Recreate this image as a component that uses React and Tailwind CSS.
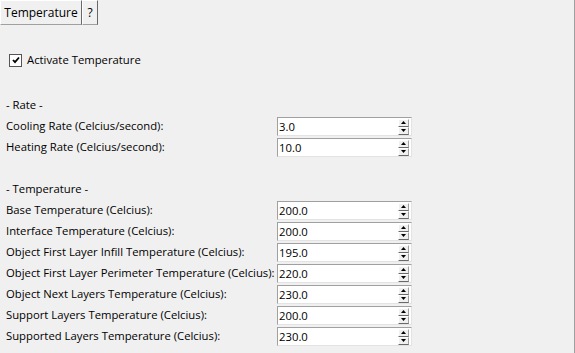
import React from "react";

const rateRows = [
  ["Cooling Rate (Celcius/second):", "3.0"],
  ["Heating Rate (Celcius/second):", "10.0"],
];

const tempRows = [
  ["Base Temperature (Celcius):", "200.0"],
  ["Interface Temperature (Celcius):", "200.0"],
  ["Object First Layer Infill Temperature (Celcius):", "195.0"],
  ["Object First Layer Perimeter Temperature (Celcius):", "220.0"],
  ["Object Next Layers Temperature (Celcius):", "230.0"],
  ["Support Layers Temperature (Celcius):", "200.0"],
  ["Supported Layers Temperature (Celcius):", "230.0"],
];

const SpinBox = ({ value }) => {
  return (
    <div className="w-[135px] h-[19px] flex items-center bg-white border border-t-[#a0a0a0] border-l-[#a0a0a0] border-r-[#e3e3e3] border-b-[#e3e3e3]">
      <div className="flex-1 pl-[1px] leading-none text-black">{value}</div>
      <div className="flex flex-col mr-[2px]">
        <div className="w-[11px] h-[8px] bg-[#f0f0f0] border border-t-white border-l-white border-r-[#a0a0a0] border-b-[#696969] flex items-center justify-center">
          <svg width="5" height="3" viewBox="0 0 5 3">
            <path d="M2.5 0 L5 3 L0 3 Z" fill="#000" />
          </svg>
        </div>
        <div className="w-[11px] h-[8px] bg-[#f0f0f0] border border-t-white border-l-white border-r-[#a0a0a0] border-b-[#696969] flex items-center justify-center">
          <svg width="5" height="3" viewBox="0 0 5 3">
            <path d="M0 0 L5 0 L2.5 3 Z" fill="#000" />
          </svg>
        </div>
      </div>
    </div>
  );
};

const Row = ({ label, value }) => {
  return (
    <div className="flex items-center h-[21px]">
      <div className="w-[271px] whitespace-nowrap">{label}</div>
      <SpinBox value={value} />
    </div>
  );
};

const TabButton = ({ children, className }) => {
  return (
    <div
      className={
        "h-[25px] flex items-center justify-center bg-[#f0f0f0] border border-t-white border-l-white border-r-[#696969] border-b-[#a0a0a0] " +
        className
      }
    >
      {children}
    </div>
  );
};

const App = () => {
  return (
    <div
      className="w-[575px] h-[353px] bg-[#f0f0f0] text-[11.3px] text-black border-r border-r-[#a0a0a0] overflow-hidden"
      style={{ fontFamily: '"Open Sans", sans-serif' }}
    >
      <div className="flex">
        <TabButton className="w-[82px] text-[12px]">Temperature</TabButton>
        <TabButton className="w-[16px] text-[12px]">?</TabButton>
      </div>

      <div className="flex items-center pl-[9px] mt-[28px] h-[14px]">
        <div className="w-[13px] h-[13px] bg-white border border-[#555] flex items-center justify-center">
          <svg width="8" height="8" viewBox="0 0 8 8">
            <path d="M1 4 L3 6.2 L7 1.5" stroke="#000" strokeWidth="1.8" fill="none" />
          </svg>
        </div>
        <span className="ml-[5px]">Activate Temperature</span>
      </div>

      <div className="px-[6px]">
        <div className="mt-[28px] h-[21px] flex items-center">- Rate -</div>
        {rateRows.map(([l, v]) => (
          <Row key={l} label={l} value={v} />
        ))}
        <div className="mt-[21px] h-[21px] flex items-center">- Temperature -</div>
        {tempRows.map(([l, v]) => (
          <Row key={l} label={l} value={v} />
        ))}
      </div>
    </div>
  );
};

export default App;
